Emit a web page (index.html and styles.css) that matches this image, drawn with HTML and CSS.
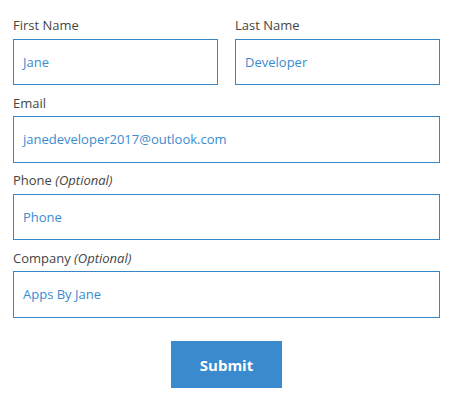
FILE: index.html
```html
<!DOCTYPE html>
<html lang="en">
<head>
<meta charset="utf-8">
<title>Contact form</title>
<link rel="stylesheet" href="styles.css">
</head>
<body>
<form class="form">
  <div class="row">
    <div class="field">
      <label class="label">First Name</label>
      <div class="input">Jane</div>
    </div>
    <div class="field">
      <label class="label">Last Name</label>
      <div class="input">Developer</div>
    </div>
  </div>
  <div class="field">
    <label class="label">Email</label>
    <div class="input">janedeveloper2017@outlook.com</div>
  </div>
  <div class="field">
    <label class="label">Phone <em>(Optional)</em></label>
    <div class="input">Phone</div>
  </div>
  <div class="field">
    <label class="label">Company <em>(Optional)</em></label>
    <div class="input">Apps By Jane</div>
  </div>
  <div class="actions">
    <button type="button" class="submit">Submit</button>
  </div>
</form>
</body>
</html>
```
FILE: styles.css
```css
html, body {
  margin: 0;
  background: #ffffff;
}
body {
  font-family: "Open Sans", "Liberation Sans", sans-serif;
}
.form {
  width: 427px;
  margin-left: 13px;
  padding-top: 17px;
  display: flex;
  flex-direction: column;
}
.row {
  display: flex;
  gap: 17px;
}
.row .field {
  flex: 1;
}
.field {
  display: flex;
  flex-direction: column;
  margin-bottom: 9.5px;
}
.label {
  font-size: 13px;
  line-height: 16px;
  color: #454545;
  margin-bottom: 5.5px;
}
.label em {
  font-style: italic;
}
.input {
  box-sizing: border-box;
  height: 46.5px;
  border: 1px solid #3a87c8;
  padding: 0 9px;
  display: flex;
  align-items: center;
  font-size: 13px;
  color: #3a8bd0;
}
.actions {
  display: flex;
  justify-content: center;
  margin-top: 14px;
}
.submit {
  width: 111px;
  height: 47px;
  border: none;
  background: #3a8acd;
  color: #ffffff;
  font-family: "Open Sans", "Liberation Sans", sans-serif;
  font-weight: 700;
  font-size: 15px;
  padding: 0;
}
```
